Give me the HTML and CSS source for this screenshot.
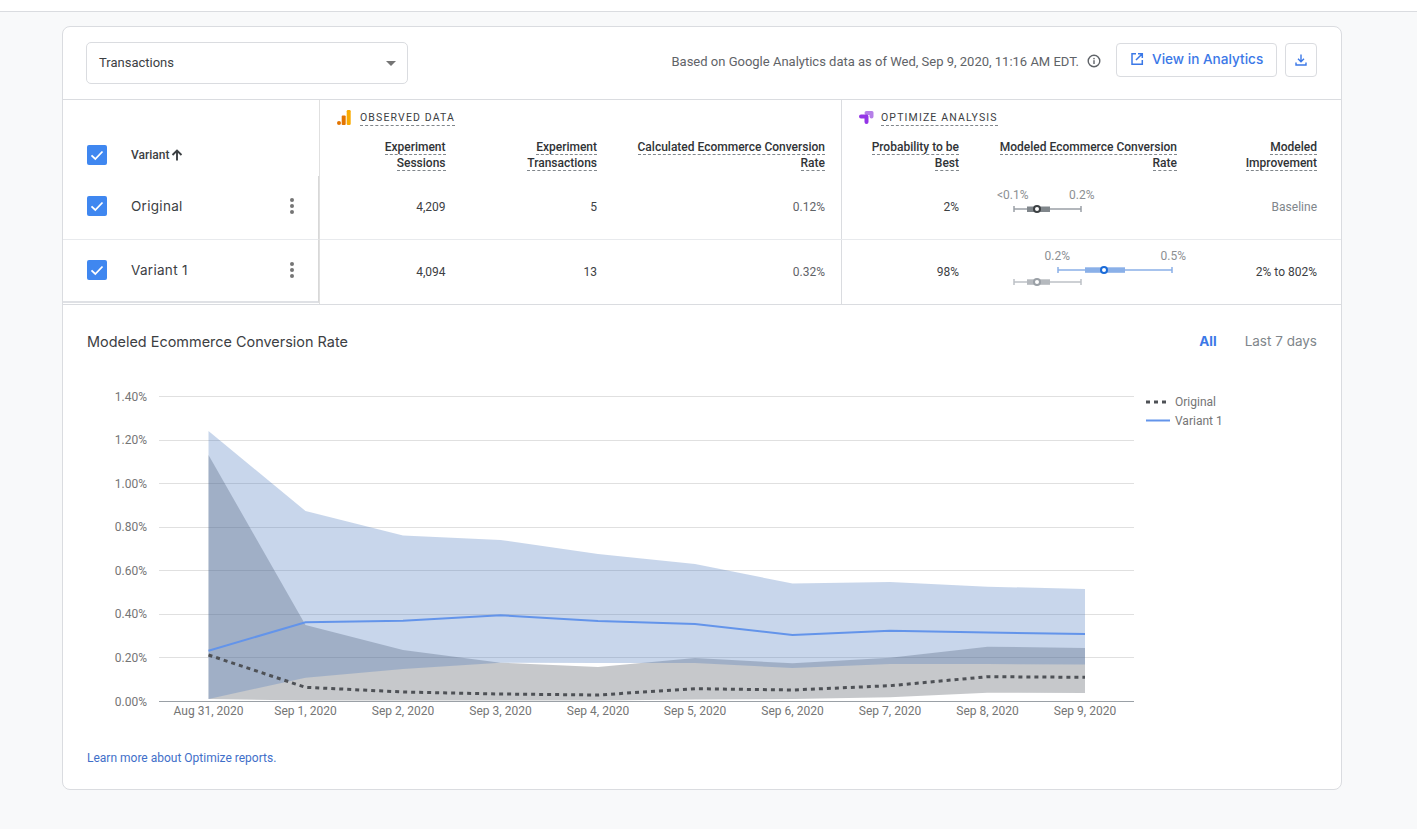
FILE: index.html
```html
<!DOCTYPE html>
<html lang="en">
<head>
<meta charset="utf-8">
<title>Optimize report</title>
<link rel="stylesheet" href="styles.css">
</head>
<body>
<div class="topband"></div>
<main class="card">
  <div class="toolbar">
    <div class="select"><span>Transactions</span><i class="caret"></i></div>
    <div class="toolbar-right">
      <span class="asof">Based on Google Analytics data as of Wed, Sep 9, 2020, 11:16 AM EDT.</span>
      <svg class="info" width="14" height="14" viewBox="0 0 14 14"><circle cx="7" cy="7" r="5.8" fill="none" stroke="#5f6368" stroke-width="1.400"/><rect x="6.300" y="6.200" width="1.400" height="3.800" fill="#5f6368"/><rect x="6.300" y="3.900" width="1.400" height="1.400" fill="#5f6368"/></svg>
      <button class="btn btn-view">
        <svg width="14" height="14" viewBox="0 0 14 14"><path d="M6 1.700H2v10.600h10.300V8M8 1.700h4.300V6M12.300 1.700 6 8" fill="none" stroke="#3b78e7" stroke-width="1.500"/></svg>
        <span>View in Analytics</span>
      </button>
      <button class="btn btn-dl">
        <svg width="12" height="12" viewBox="0 0 12 12"><path d="M6 .5v7M3 4.800 6 7.800l3-3M1 8.500v2.500h10V8.500" fill="none" stroke="#3b78e7" stroke-width="1.400"/></svg>
      </button>
    </div>
  </div>

  <div class="table">
    <div class="frozen">
      <div class="frozen-head">
        <span class="check"><svg width="20" height="20" viewBox="0 0 20 20"><path d="M4.500 10.300 8.300 14l7.200-7.500" fill="none" stroke="#fff" stroke-width="1.800"/></svg></span>
        <span class="variant-head">Variant</span>
        <svg class="arrow" width="12" height="12" viewBox="0 0 12 12"><path d="M6 11.500V1.500M1.500 6 6 1.500 10.500 6" fill="none" stroke="#3c4043" stroke-width="1.900"/></svg>
      </div>
      <div class="frozen-row row-a">
        <span class="check"><svg width="20" height="20" viewBox="0 0 20 20"><path d="M4.500 10.300 8.300 14l7.200-7.500" fill="none" stroke="#fff" stroke-width="1.800"/></svg></span>
        <span class="variant-name">Original</span>
        <span class="kebab"><i></i><i></i><i></i></span>
      </div>
      <div class="frozen-row row-b">
        <span class="check"><svg width="20" height="20" viewBox="0 0 20 20"><path d="M4.500 10.300 8.300 14l7.200-7.500" fill="none" stroke="#fff" stroke-width="1.800"/></svg></span>
        <span class="variant-name">Variant 1</span>
        <span class="kebab"><i></i><i></i><i></i></span>
      </div>
    </div>

    <section class="group group-observed">
      <div class="group-title">
        <svg width="14" height="15" viewBox="0 0 14 15"><circle cx="2" cy="13" r="2" fill="#e37400"/><rect x="4.700" y="5.500" width="4" height="9.500" rx="1" fill="#e37400"/><rect x="9.700" y="0" width="4" height="15" rx="1.200" fill="#f9ab00"/></svg>
        <span class="dash">OBSERVED DATA</span>
      </div>
      <div class="th"><span class="dash">Experiment<br>Sessions</span></div>
      <div class="th"><span class="dash">Experiment<br>Transactions</span></div>
      <div class="th col-end"><span class="dash">Calculated Ecommerce Conversion<br>Rate</span></div>
      <div class="td row-a">4,209</div>
      <div class="td row-a">5</div>
      <div class="td row-a muted col-end">0.12%</div>
      <div class="td row-b">4,094</div>
      <div class="td row-b">13</div>
      <div class="td row-b muted col-end">0.32%</div>
    </section>

    <section class="group group-optimize">
      <div class="group-title">
        <svg width="15" height="15" viewBox="0 0 15 15"><path d="M7.500 1h5.500a1.500 1.500 0 0 1 1.500 1.500v4a2 2 0 0 1-4 0V5h-3a2 2 0 0 1 0-4z" fill="#b57fe8"/><path d="M2 4.500h5.500a2 2 0 0 1 2 2V12a2 2 0 0 1-4 0V8.500H2a2 2 0 0 1 0-4z" fill="#9334e6"/></svg>
        <span class="dash">OPTIMIZE ANALYSIS</span>
      </div>
      <div class="th"><span class="dash">Probability to be<br>Best</span></div>
      <div class="th"><span class="dash">Modeled Ecommerce Conversion<br>Rate</span></div>
      <div class="th th-last"><span class="dash">Modeled<br>Improvement</span></div>
      <div class="td row-a">2%</div>
      <div class="td td-range row-a">
        <svg width="218" height="63" viewBox="975 176 218 63">
          <text class="range-label" x="997" y="199">&lt;0.1%</text>
          <text class="range-label" x="1069" y="199">0.2%</text>
          <path class="r-line r-dark" d="M1014 209H1081M1014 206v6M1081 206v6"/>
          <rect class="r-box-dark" x="1027" y="206.500" width="23" height="5.500"/>
          <circle class="r-dot-dark" cx="1037" cy="209" r="3"/>
        </svg>
      </div>
      <div class="td td-last row-a faint">Baseline</div>
      <div class="td row-b">98%</div>
      <div class="td td-range row-b">
        <svg width="218" height="64" viewBox="975 240 218 64">
          <text class="range-label" x="1044.500" y="260">0.2%</text>
          <text class="range-label" x="1160.500" y="260">0.5%</text>
          <path class="r-line r-blue" d="M1058 270H1172M1058 267v6M1172 267v6"/>
          <rect class="r-box-blue" x="1085" y="267.300" width="40" height="5.500"/>
          <circle class="r-dot-blue" cx="1104" cy="270" r="3"/>
          <path class="r-line r-light" d="M1014 282H1081M1014 279v6M1081 279v6"/>
          <rect class="r-box-light" x="1027" y="279.300" width="23" height="5.500"/>
          <circle class="r-dot-light" cx="1037" cy="282" r="3"/>
        </svg>
      </div>
      <div class="td td-last row-b">2% to 802%</div>
    </section>
  </div>

  <section class="chart-section">
    <div class="chart-head">
      <h2>Modeled Ecommerce Conversion Rate</h2>
      <div class="ranges"><span class="range-on">All</span><span class="range-off">Last 7 days</span></div>
    </div>
    <svg class="chart" width="1278" height="345" viewBox="63 380 1278 345">
      <g class="grid">
        <path d="M159 396.500H1134M159 440.500H1134M159 483.500H1134M159 527.500H1134M159 570.500H1134M159 614.500H1134M159 657.500H1134"/>
      </g>
      <path class="axis" d="M159 701.500H1134"/>
      <g class="ylabels">
        <text x="147" y="401">1.40%</text>
        <text x="147" y="444">1.20%</text>
        <text x="147" y="488">1.00%</text>
        <text x="147" y="531">0.80%</text>
        <text x="147" y="575">0.60%</text>
        <text x="147" y="618">0.40%</text>
        <text x="147" y="662">0.20%</text>
        <text x="147" y="706">0.00%</text>
      </g>
      <path class="band-gray" d="M208.500 455 305.500 625 403 650 500.500 662.700 598 667 695 658 792.500 663.300 890 657.700 987.500 646.700 1085 648V693L987.500 692.700 890 697.300 792.500 699 695 699.500 598 700.500 500.500 700.500 403 700.500 305.500 700.500 208.500 699Z"/>
      <path class="band-blue" d="M208.500 431 305.500 511 403 535.500 500.500 540 598 554 695 564 792.500 583.500 890 582 987.500 586.700 1085 589V664.500L987.500 664 890 664 792.500 668 695 663 598 663 500.500 662.700 403 669 305.500 677.700 208.500 699Z"/>
      <path class="line-blue" d="M208.500 650.700 305.500 622.300 403 620.700 500.500 615.300 598 621 695 624 792.500 635 890 630.700 987.500 632.500 1085 634"/>
      <path class="line-dots" d="M208.500 655 305.500 687.300 403 692 500.500 694 598 695 695 688.700 792.500 690 890 685.700 987.500 676.700 1085 677.300"/>
      <g class="xlabels">
        <text x="208.500" y="715">Aug 31, 2020</text>
        <text x="305.500" y="715">Sep 1, 2020</text>
        <text x="403" y="715">Sep 2, 2020</text>
        <text x="500.500" y="715">Sep 3, 2020</text>
        <text x="598" y="715">Sep 4, 2020</text>
        <text x="695" y="715">Sep 5, 2020</text>
        <text x="792.500" y="715">Sep 6, 2020</text>
        <text x="890" y="715">Sep 7, 2020</text>
        <text x="987.500" y="715">Sep 8, 2020</text>
        <text x="1085" y="715">Sep 9, 2020</text>
      </g>
      <path class="legend-dots" d="M1146 402H1168"/>
      <text class="legend" x="1175" y="406">Original</text>
      <path class="legend-line" d="M1146 420.500H1170"/>
      <text class="legend" x="1175" y="425">Variant 1</text>
    </svg>
    <a class="learn" href="#">Learn more about Optimize reports.</a>
  </section>
</main>
</body>
</html>
```
FILE: styles.css
```css
* { box-sizing: border-box; }
html, body { margin: 0; height: 829px; overflow: hidden; }
body { background: #f8f9fa; font-family: Roboto, "Liberation Sans", sans-serif; color: #3c4043; }

.topband { height: 12px; background: #fff; border-bottom: 1px solid #dadce0; }

.card {
  width: 1280px;
  height: 764px;
  margin: 14px 0 0 62px;
  background: #fff;
  border: 1px solid #dadce0;
  border-radius: 8px;
}

.toolbar {
  height: 73px;
  padding: 15px 24px 0 23px;
  display: flex;
  justify-content: space-between;
  align-items: flex-start;
  border-bottom: 1px solid #dadce0;
}
.select {
  width: 322px;
  height: 42px;
  padding: 0 11px 2px 12px;
  display: flex;
  align-items: center;
  justify-content: space-between;
  border: 1px solid #dadce0;
  border-radius: 5px;
  font-size: 13px;
  color: #3c4043;
}
.caret { width: 0; height: 0; margin-top: 2px; border-left: 5px solid transparent; border-right: 5px solid transparent; border-top: 5px solid #757575; }
.toolbar-right { display: flex; align-items: center; height: 34px; margin-top: 1px; }
.asof { font-size: 13px; color: #5f6368; margin: 2px 8px 0 0; }
.info { margin: 2px 15px 0 0; }
.btn { height: 34px; background: #fff; border: 1px solid #dadce0; border-radius: 4px; display: flex; align-items: center; padding: 0; font-family: Inter, sans-serif; }
.btn-view { width: 161px; padding: 0 0 2px 13px; margin-right: 8px; }
.btn-view span { margin-left: 8px; font-size: 13.600px; font-weight: 500; color: #3b78e7; }
.btn-dl { width: 32px; justify-content: center; }

.table { display: flex; height: 205px; border-bottom: 1px solid #dadce0; }

.frozen { width: 257px; border-right: 1px solid #e0e0e0; flex: none; }
.frozen-head { height: 76px; padding: 45px 0 0 24px; display: flex; align-items: flex-start; }
.check { width: 20px; height: 20px; border-radius: 2px; background: #3f87f0; flex: none; display: block; }
.check svg { display: block; }
.variant-head { margin: 3px 0 0 24px; font-size: 12px; font-weight: 500; color: #3c4043; line-height: 14px; }
.arrow { margin: 4px 0 0 2px; }
.frozen-row { display: flex; align-items: center; padding-left: 24px; border-right: 1px solid #d8d8d8; }
.frozen-row.row-a { height: 64px; border-bottom: 1px solid #e8eaed; padding-bottom: 3px; }
.frozen-row.row-b { height: 63px; border-bottom: 2px solid #dfe1e5; padding-bottom: 1px; }
.variant-name { margin-left: 24px; font-family: Inter, sans-serif; font-size: 13.500px; letter-spacing: .3px; color: #3c4043; flex: 1; }
.kebab { width: 4px; margin-right: 24px; display: flex; flex-direction: column; gap: 2px; }
.kebab i { width: 4px; height: 4px; border-radius: 50%; background: #757575; }

.group { display: grid; grid-template-rows: 26px 50px 64px 64px; }
.group-observed { width: 522px; grid-template-columns: 141.500px 151.500px 229px; border-right: 1px solid #dadce0; flex: none; }
.group-observed .td.row-a, .group-optimize .td.row-a { border-bottom: 1px solid #e8eaed; }
.group-optimize { flex: 1; grid-template-columns: 133px 218px 1fr; }
.group-title { grid-column: 1 / -1; padding: 11px 0 0 17px; display: flex; align-items: flex-start; gap: 9px; font-size: 10.500px; font-weight: 400; letter-spacing: 1.150px; color: #3c4043; line-height: 14px; }
.group-title svg { flex: none; margin-top: -1px; }
.group-optimize .group-title { gap: 7px; }
.dash { border-bottom: 1px dashed #80868b; }
.th { padding: 13px 16px 0 0; text-align: right; font-size: 12px; font-weight: 500; line-height: 16px; color: #303336; }
.th-last { padding-right: 24px; }
.td { display: flex; align-items: center; justify-content: flex-end; padding: 0 16px 1px 0; font-size: 12px; color: #3c4043; }
.td.row-b { padding-bottom: 0; }
.td-last { padding-right: 24px; }
.col-end { padding-right: 17px; }
.td-range { padding: 0 !important; }
.td-range svg { display: block; }
.muted { color: #5f6368; }
.faint { color: #80868b; }

.range-label { font: 12px Roboto, sans-serif; fill: #8c8f93; }
.r-line { fill: none; stroke-width: 1.500; }
.r-dark { stroke: #9aa0a6; }
.r-box-dark { fill: #80868b; }
.r-dot-dark { fill: #fff; stroke: #3c4043; stroke-width: 2; }
.r-blue { stroke: #8ab0e8; }
.r-box-blue { fill: #8ab0e8; }
.r-dot-blue { fill: #fff; stroke: #1a6bd8; stroke-width: 2; }
.r-light { stroke: #bdc1c6; }
.r-box-light { fill: #b5b9be; }
.r-dot-light { fill: #fff; stroke: #9aa0a6; stroke-width: 2; }

.chart-head { height: 75px; padding: 26px 24px 0 24px; display: flex; justify-content: space-between; align-items: flex-start; }
.chart-head h2 { margin: 1px 0 0; font-family: Inter, sans-serif; font-weight: 400; font-size: 14.450px; line-height: 20px; color: #3c4043; }
.ranges { display: flex; gap: 28px; font-family: Inter, sans-serif; font-size: 13.500px; line-height: 20px; }
.range-on { color: #3b78e7; font-weight: 700; }
.range-off { color: #80868b; }
.chart { display: block; }
.chart text { font-family: Roboto, sans-serif; font-size: 12px; }
.grid path { fill: none; stroke: #e0e0e0; stroke-width: 1; }
.axis { fill: none; stroke: #9aa0a6; stroke-width: 1; }
.ylabels text { text-anchor: end; fill: #757575; }
.xlabels text { text-anchor: middle; fill: #757575; }
.band-gray { fill: rgb(65, 72, 82); fill-opacity: .3; }
.band-blue { fill: rgb(72, 118, 188); fill-opacity: .3; }
.line-blue { fill: none; stroke: #6394ea; stroke-width: 2; }
.line-dots { fill: none; stroke: #4e5156; stroke-width: 3; stroke-dasharray: 4 4; }
.legend { fill: #757575; }
.legend-dots { fill: none; stroke: #4e5156; stroke-width: 3; stroke-dasharray: 4 4; }
.legend-line { fill: none; stroke: #6394ea; stroke-width: 2; }

.learn { display: block; margin: 26px 0 0 24px; font-size: 12px; line-height: 14px; color: #3f6fc9; text-decoration: none; }
```
